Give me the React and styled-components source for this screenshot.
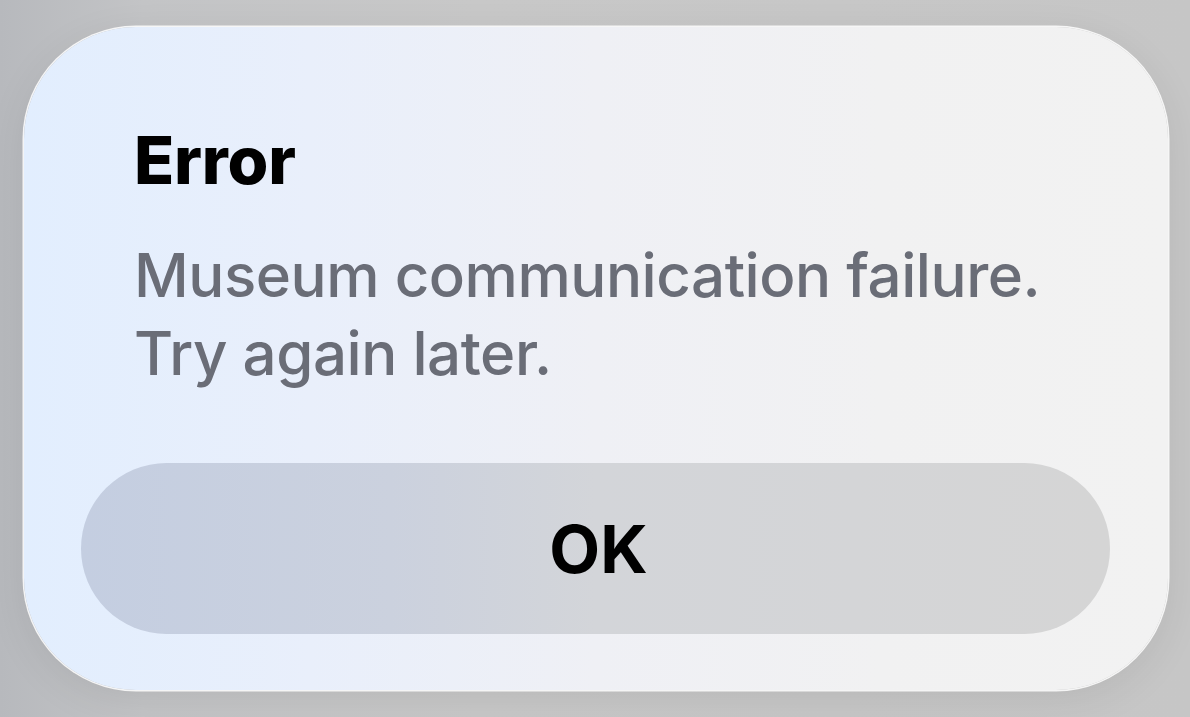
import React from "react";
import styled, { createGlobalStyle } from "styled-components";

const GlobalStyle = createGlobalStyle`
  html, body {
    margin: 0;
    padding: 0;
  }
  body {
    width: 1190px;
    height: 717px;
    overflow: hidden;
    background: linear-gradient(90deg, #b7b9bd 0%, #c3c4c6 12%, #c8c8c8 40%, #c6c6c6 100%);
    font-family: Inter, "Noto Sans", "Liberation Sans", sans-serif;
    -webkit-font-smoothing: antialiased;
  }
`;

const Screen = styled.div`
  height: 717px;
  padding: 27px 22px 27px 24px;
  box-sizing: border-box;
  display: flex;
`;

const Alert = styled.div`
  flex: 1;
  display: flex;
  flex-direction: column;
  padding: 95px 58px 56px 57px;
  border-radius: 112px;
  background: linear-gradient(90deg, #e2eefe 0%, #e9effb 25%, #eff0f5 50%, #f1f1f2 75%, #f2f2f2 100%);
  box-shadow: 0 0 0 1.5px rgba(255, 255, 255, 0.85), 0 10px 40px rgba(0, 0, 0, 0.08);
`;

const TextBlock = styled.div`
  padding-left: 53px;
`;

const Title = styled.h1`
  margin: 0;
  font-size: 66px;
  line-height: 76px;
  font-weight: 800;
  letter-spacing: -0.2px;
  color: #000;
`;

const Message = styled.p`
  margin: 38px 0 0;
  font-size: 60px;
  line-height: 78px;
  font-weight: 500;
  letter-spacing: -0.45px;
  color: #6a6d77;
`;

const Button = styled.button`
  margin-top: auto;
  height: 171px;
  border: none;
  border-radius: 86px;
  background: linear-gradient(90deg, #c4cee1 0%, #cbd1de 30%, #d3d5d9 50%, #d5d5d5 100%);
  font-family: inherit;
  font-size: 66px;
  font-weight: 700;
  color: #000;
  display: flex;
  align-items: center;
  justify-content: center;
  padding: 0 0 0 6px;
  cursor: pointer;
`;

const App = () => {
  return (
    <>
      <GlobalStyle />
      <Screen>
        <Alert>
          <TextBlock>
            <Title>Error</Title>
            <Message>
              Museum communication failure.
              <br />
              Try again later.
            </Message>
          </TextBlock>
          <Button>OK</Button>
        </Alert>
      </Screen>
    </>
  );
};

export default App;
